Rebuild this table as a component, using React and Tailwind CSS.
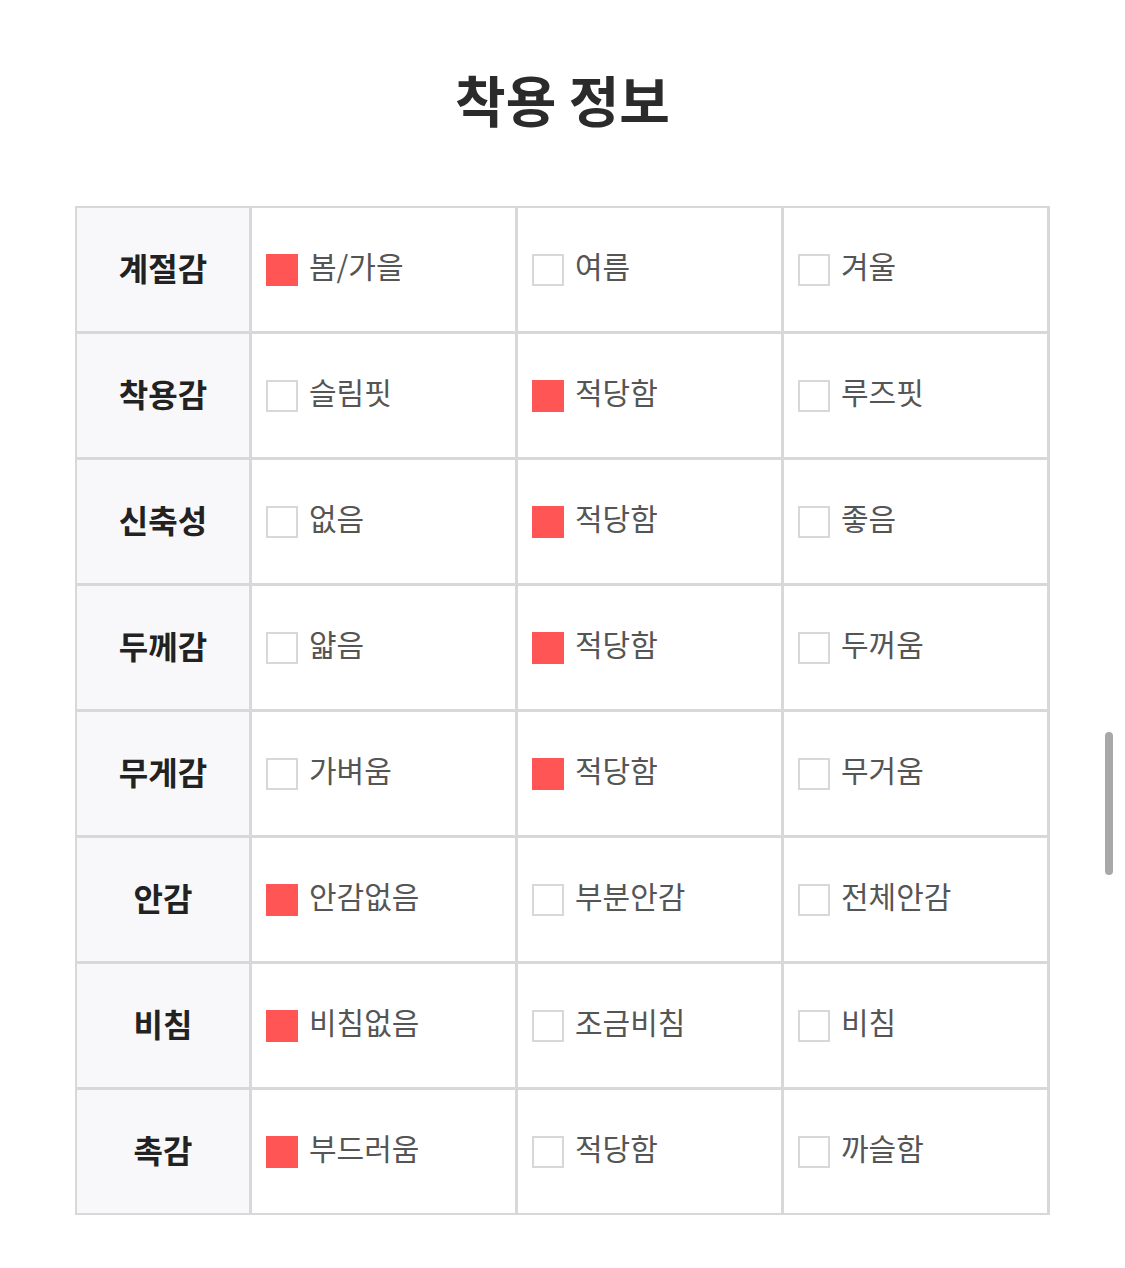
import React from 'react'

const rows = [
  { label: '계절감', options: ['봄/가을', '여름', '겨울'], checked: 0 },
  { label: '착용감', options: ['슬림핏', '적당함', '루즈핏'], checked: 1 },
  { label: '신축성', options: ['없음', '적당함', '좋음'], checked: 1 },
  { label: '두께감', options: ['얇음', '적당함', '두꺼움'], checked: 1 },
  { label: '무게감', options: ['가벼움', '적당함', '무거움'], checked: 1 },
  { label: '안감', options: ['안감없음', '부분안감', '전체안감'], checked: 0 },
  { label: '비침', options: ['비침없음', '조금비침', '비침'], checked: 0 },
  { label: '촉감', options: ['부드러움', '적당함', '까슬함'], checked: 0 },
]

function Option({ text, checked }) {
  return (
    <div className="bg-white h-[123px] flex items-center pl-[14px] gap-[11px]">
      {checked ? (
        <span className="w-8 h-8 bg-[#ff5555] shrink-0" />
      ) : (
        <span className="w-8 h-8 border-2 border-[#d8d8d8] bg-white shrink-0" />
      )}
      <span className="text-[30px] leading-none text-[#555] -mt-[10px]">{text}</span>
    </div>
  )
}

export default function App() {
  return (
    <div
      className="relative w-[1125px] h-[1268px] bg-white"
      style={{ fontFamily: '"Noto Sans CJK KR", "Noto Sans", sans-serif' }}
    >
      {/* 제목 */}
      <h1 className="pt-[71px] text-center text-[55px] leading-none font-bold text-[#2b2b2b]">
        착용 정보
      </h1>

      {/* 표 */}
      <div className="mt-[80px] mx-auto w-[975px] grid grid-cols-[172px_263px_263px_263px] gap-[3px] p-[2px] bg-[#d8d8d8]">
        {rows.map((row) => (
          <React.Fragment key={row.label}>
            <div className="bg-[#f8f8fa] h-[123px] flex items-center justify-center">
              <span className="text-[32px] leading-none font-bold text-[#222] -mt-[6px]">{row.label}</span>
            </div>
            {row.options.map((opt, i) => (
              <Option key={opt + i} text={opt} checked={i === row.checked} />
            ))}
          </React.Fragment>
        ))}
      </div>

      {/* 스크롤바 */}
      <div className="absolute left-[1105px] top-[732px] w-2 h-[143px] rounded-full bg-[#a8a8a8]" />
    </div>
  )
}
